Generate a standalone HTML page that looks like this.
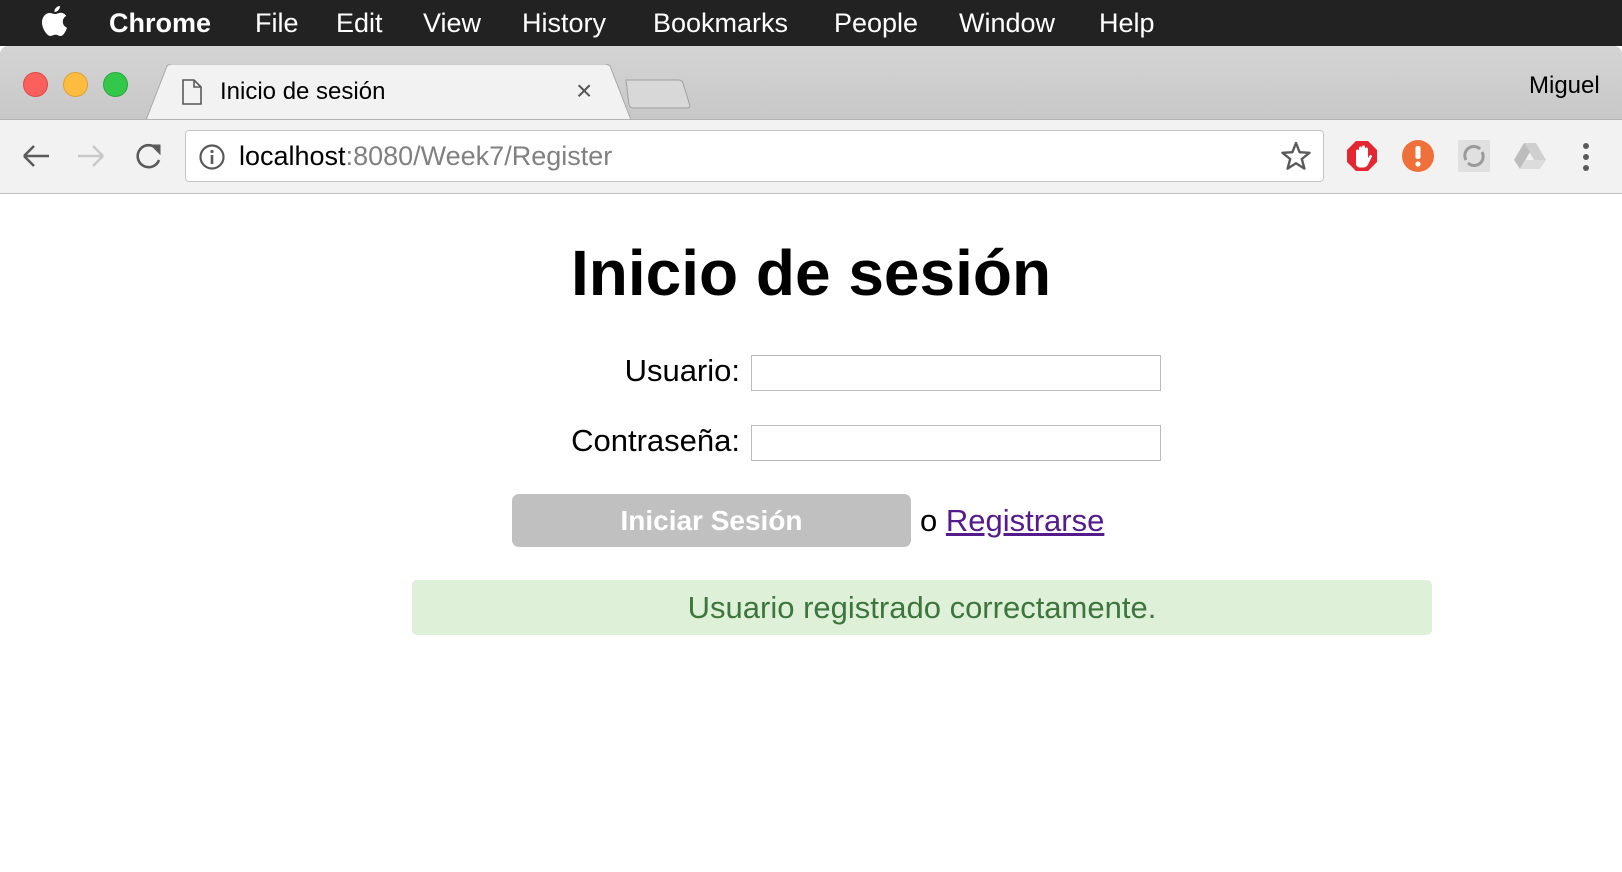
<!DOCTYPE html>
<html><head><meta charset="utf-8"><style>
*{margin:0;padding:0;box-sizing:border-box}
body{width:1622px;height:872px;overflow:hidden;background:#fff;font-family:"Liberation Sans",Arial,sans-serif;position:relative}
.abs{position:absolute}
#menu{left:0;top:0;width:1622px;height:46px;background:#222;color:#fff;font-size:27px}
#menu span{position:absolute;top:6px;line-height:34px}
#tabs{left:0;top:46px;width:1622px;height:73px;background:linear-gradient(#d4d4d4,#c8c8c8);border-radius:8px 8px 0 0}
#toolbar{left:0;top:119px;width:1622px;height:75px;background:#f2f2f2;border-top:1px solid #b4b4b4;border-bottom:1px solid #c0c0c0}
.dot{width:25px;height:25px;border-radius:50%;top:72px}
</style></head><body>
<div id="menu" class="abs">
<svg class="abs" style="left:41px;top:6px" width="28" height="32" viewBox="0 0 28 32"><path fill="#fff" d="M19 0c0 3-2.5 6-5.5 6C13 3 16 0 19 0zM14 8c2 0 3.5-1.3 5.5-1.3 2.3 0 4.5 1.2 5.7 3.2-5 2.8-4.2 10 .8 11.8-1 3-3.5 8.3-6.5 8.3-2 0-2.6-1.2-5-1.2s-3.2 1.2-5.2 1.2C6 30 1 22.5 1 16.5 1 10.5 5 7 8.5 7c2 0 3.8 1 5.5 1z"/></svg>
<span style="left:109px;font-weight:bold">Chrome</span>
<span style="left:255px">File</span>
<span style="left:336px">Edit</span>
<span style="left:423px">View</span>
<span style="left:522px">History</span>
<span style="left:653px">Bookmarks</span>
<span style="left:834px">People</span>
<span style="left:959px">Window</span>
<span style="left:1099px">Help</span>
</div>
<div id="tabs" class="abs"></div>
<div class="abs dot" style="left:23px;background:#fc605c;border:1px solid #de4a44"></div>
<div class="abs dot" style="left:63px;background:#fdbc40;border:1px solid #dea032"></div>
<div class="abs dot" style="left:103px;background:#34c84a;border:1px solid #27a83a"></div>
<svg class="abs" style="left:144px;top:64px" width="560" height="56"><path d="M2 56 L23 2 Q25 0 29 0 L460 0 Q464 0 466 2 L487 56 Z" fill="#f2f2f2" stroke="#a8a8a8"/><path d="M482 16 L534 16 Q538 16 539 19 L546 42 Q546 44 542 44 L490 44 Q486 44 485 41 Z" fill="#d8d8d8" stroke="#a0a0a0"/></svg>
<svg class="abs" style="left:182px;top:79px" width="20" height="26"><path d="M1 1H12L19 8V25H1Z M12 1V8H19" fill="none" stroke="#5a5a5a" stroke-width="1.6"/></svg>
<div class="abs" style="left:220px;top:78px;font-size:24px;color:#000">Inicio de sesión</div>
<div class="abs" style="left:576px;top:75px;font-size:28px;color:#555">×</div>
<div class="abs" style="left:1529px;top:72px;font-size:24px;color:#000">Miguel</div>
<div id="toolbar" class="abs"></div>
<svg class="abs" style="left:20px;top:141px" width="150" height="30" fill="none" stroke-width="2.6"><path d="M4 15H29M4 15L14 5M4 15L14 25" stroke="#5a5a5a"/><path d="M83 15H58M83 15L73 5M83 15L73 25" stroke="#c8c8c8"/><path d="M137 8A11 11 0 1 0 139 19" stroke="#5a5a5a"/><path d="M131 4H140V13Z" fill="#5a5a5a" stroke="#5a5a5a" stroke-width="1"/></svg>
<div class="abs" style="left:185px;top:130px;width:1139px;height:52px;background:#fff;border:1px solid #c6c6c6;border-radius:4px"></div>
<svg class="abs" style="left:198px;top:143px" width="28" height="28"><circle cx="14" cy="14" r="11.5" fill="none" stroke="#5a5a5a" stroke-width="2.2"/><rect x="12.7" y="12" width="2.6" height="9" fill="#5a5a5a"/><circle cx="14" cy="8.5" r="1.6" fill="#5a5a5a"/></svg>
<div class="abs" style="left:239px;top:141px;font-size:27px;color:#000">localhost<span style="color:#808080">:8080/Week7/Register</span></div>
<svg class="abs" style="left:1281px;top:141px" width="30" height="30"><path d="M15 2L18.6 11.2 28.5 11.8 20.8 18 23.4 27.6 15 22.2 6.6 27.6 9.2 18 1.5 11.8 11.4 11.2Z" fill="none" stroke="#5a5a5a" stroke-width="2.4" stroke-linejoin="round"/></svg>
<svg class="abs" style="left:1346px;top:140px" width="32" height="32"><path d="M10 1H22L31 10V22L22 31H10L1 22V10Z" fill="#e3262f"/><path d="M10 24V11a1.5 1.5 0 0 1 3 0V8a1.5 1.5 0 0 1 3 0V7a1.5 1.5 0 0 1 3 0v2a1.5 1.5 0 0 1 3 0v9l2-3a1.5 1.5 0 0 1 2 1.5l-4 8c-1 2-3 3-5 3h-3c-2 0-4-1.5-4-3.5z" fill="#fff"/></svg>
<svg class="abs" style="left:1402px;top:140px" width="32" height="32"><circle cx="16" cy="16" r="16" fill="#f0703a"/><rect x="13.5" y="6" width="5" height="13" rx="2" fill="#fff"/><circle cx="16" cy="24" r="2.6" fill="#fff"/></svg>
<div class="abs" style="left:1458px;top:140px;width:32px;height:32px;background:#e0e0e0"></div>
<svg class="abs" style="left:1458px;top:140px" width="32" height="32" fill="none" stroke="#9a9a9a" stroke-width="3"><path d="M8 20A9 9 0 0 1 22 9M24 12A9 9 0 0 1 10 23"/></svg>
<svg class="abs" style="left:1513px;top:142px" width="34" height="28"><path d="M11 1H23L33 18H21Z" fill="#cfcfcf"/><path d="M11 1L1 18 7 27 17 10Z" fill="#bdbdbd"/><path d="M7 27H27L33 18H13Z" fill="#dcdcdc"/></svg>
<svg class="abs" style="left:1580px;top:142px" width="12" height="30" fill="#5a5a5a"><circle cx="6" cy="4" r="3"/><circle cx="6" cy="15" r="3"/><circle cx="6" cy="26" r="3"/></svg>
<div class="abs" style="left:0;top:228px;width:1622px;text-align:center;font-size:64px;font-weight:bold;line-height:90px">Inicio de sesión</div>
<div class="abs" style="left:400px;top:352px;width:340px;text-align:right;font-size:31px;line-height:38px">Usuario:</div>
<div class="abs" style="left:751px;top:355px;width:410px;height:36px;border:1px solid #bbb"></div>
<div class="abs" style="left:400px;top:422px;width:340px;text-align:right;font-size:31px;line-height:38px">Contraseña:</div>
<div class="abs" style="left:751px;top:425px;width:410px;height:36px;border:1px solid #bbb"></div>
<div class="abs" style="left:512px;top:494px;width:399px;height:53px;background:#c0c0c0;border-radius:7px;color:#fff;font-weight:bold;font-size:28px;text-align:center;line-height:53px">Iniciar Sesión</div>
<div class="abs" style="left:920px;top:501px;font-size:31px;line-height:40px">o <span style="color:#551a8b;text-decoration:underline">Registrarse</span></div>
<div class="abs" style="left:412px;top:580px;width:1020px;height:55px;background:#dff0d8;border-radius:5px;color:#3c763d;font-size:31px;text-align:center;line-height:55px">Usuario registrado correctamente.</div>
</body></html>
